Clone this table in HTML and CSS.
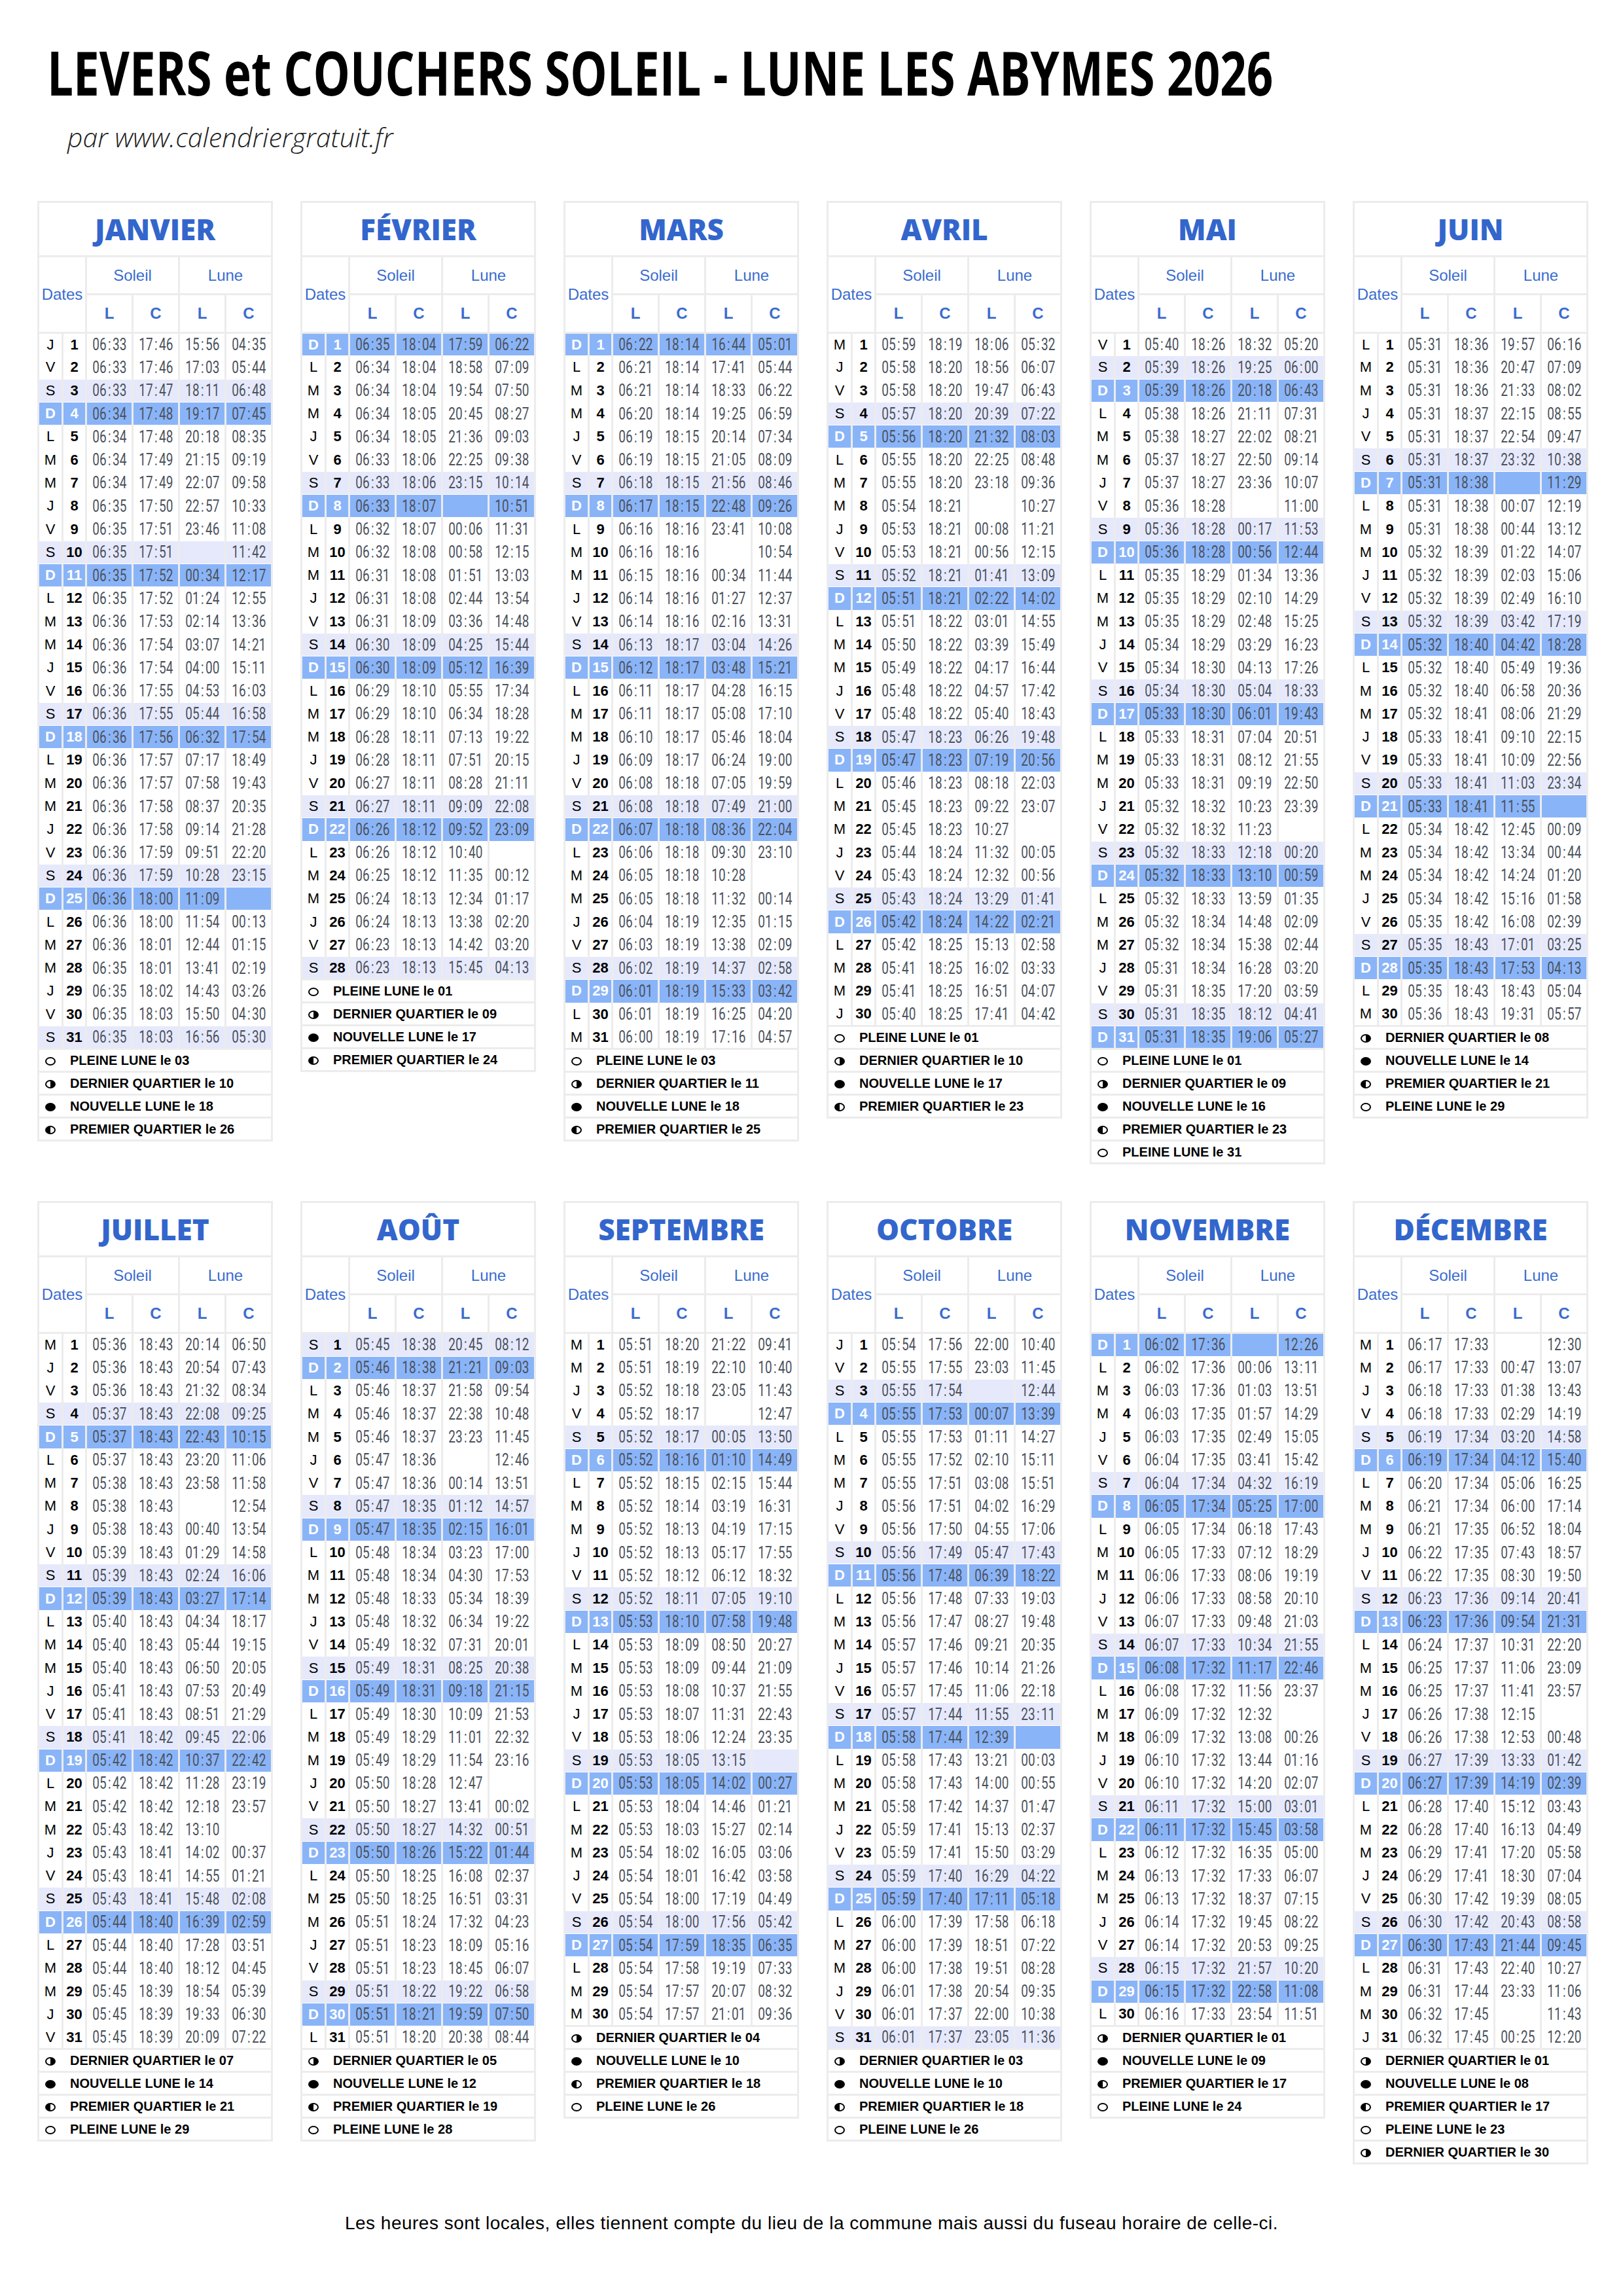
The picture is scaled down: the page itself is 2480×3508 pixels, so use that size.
FILE: index.html
```html
<!DOCTYPE html>
<html lang="fr">
<head>
<meta charset="utf-8">
<title>Levers et couchers soleil - lune Les Abymes 2026</title>
<link rel="stylesheet" href="styles.css">
</head>
<body>
<header class="head">
<h1 class="title"><span>LEVERS et COUCHERS SOLEIL - LUNE LES ABYMES 2026</span></h1>
<p class="sub">par www.calendriergratuit.fr</p>
</header>
<main class="year">

<table class="cal">
<colgroup><col class="c1"><col class="c2"><col class="ct"><col class="ct"><col class="ct"><col class="ct"></colgroup>
<thead>
<tr class="h0"><th colspan="6">JANVIER</th></tr>
<tr class="h1"><th colspan="2" rowspan="2">Dates</th><th colspan="2">Soleil</th><th colspan="2">Lune</th></tr>
<tr class="h2"><th>L</th><th>C</th><th>L</th><th>C</th></tr>
</thead>
<tbody class="days">
<tr><td>J<td>1<td><span>06 : 33</span><td><span>17 : 46</span><td><span>15 : 56</span><td><span>04 : 35</span>
<tr><td>V<td>2<td><span>06 : 33</span><td><span>17 : 46</span><td><span>17 : 03</span><td><span>05 : 44</span>
<tr class="s"><td>S<td>3<td><span>06 : 33</span><td><span>17 : 47</span><td><span>18 : 11</span><td><span>06 : 48</span>
<tr class="d"><td>D<td>4<td><span>06 : 34</span><td><span>17 : 48</span><td><span>19 : 17</span><td><span>07 : 45</span>
<tr><td>L<td>5<td><span>06 : 34</span><td><span>17 : 48</span><td><span>20 : 18</span><td><span>08 : 35</span>
<tr><td>M<td>6<td><span>06 : 34</span><td><span>17 : 49</span><td><span>21 : 15</span><td><span>09 : 19</span>
<tr><td>M<td>7<td><span>06 : 34</span><td><span>17 : 49</span><td><span>22 : 07</span><td><span>09 : 58</span>
<tr><td>J<td>8<td><span>06 : 35</span><td><span>17 : 50</span><td><span>22 : 57</span><td><span>10 : 33</span>
<tr><td>V<td>9<td><span>06 : 35</span><td><span>17 : 51</span><td><span>23 : 46</span><td><span>11 : 08</span>
<tr class="s"><td>S<td>10<td><span>06 : 35</span><td><span>17 : 51</span><td><td><span>11 : 42</span>
<tr class="d"><td>D<td>11<td><span>06 : 35</span><td><span>17 : 52</span><td><span>00 : 34</span><td><span>12 : 17</span>
<tr><td>L<td>12<td><span>06 : 35</span><td><span>17 : 52</span><td><span>01 : 24</span><td><span>12 : 55</span>
<tr><td>M<td>13<td><span>06 : 36</span><td><span>17 : 53</span><td><span>02 : 14</span><td><span>13 : 36</span>
<tr><td>M<td>14<td><span>06 : 36</span><td><span>17 : 54</span><td><span>03 : 07</span><td><span>14 : 21</span>
<tr><td>J<td>15<td><span>06 : 36</span><td><span>17 : 54</span><td><span>04 : 00</span><td><span>15 : 11</span>
<tr><td>V<td>16<td><span>06 : 36</span><td><span>17 : 55</span><td><span>04 : 53</span><td><span>16 : 03</span>
<tr class="s"><td>S<td>17<td><span>06 : 36</span><td><span>17 : 55</span><td><span>05 : 44</span><td><span>16 : 58</span>
<tr class="d"><td>D<td>18<td><span>06 : 36</span><td><span>17 : 56</span><td><span>06 : 32</span><td><span>17 : 54</span>
<tr><td>L<td>19<td><span>06 : 36</span><td><span>17 : 57</span><td><span>07 : 17</span><td><span>18 : 49</span>
<tr><td>M<td>20<td><span>06 : 36</span><td><span>17 : 57</span><td><span>07 : 58</span><td><span>19 : 43</span>
<tr><td>M<td>21<td><span>06 : 36</span><td><span>17 : 58</span><td><span>08 : 37</span><td><span>20 : 35</span>
<tr><td>J<td>22<td><span>06 : 36</span><td><span>17 : 58</span><td><span>09 : 14</span><td><span>21 : 28</span>
<tr><td>V<td>23<td><span>06 : 36</span><td><span>17 : 59</span><td><span>09 : 51</span><td><span>22 : 20</span>
<tr class="s"><td>S<td>24<td><span>06 : 36</span><td><span>17 : 59</span><td><span>10 : 28</span><td><span>23 : 15</span>
<tr class="d"><td>D<td>25<td><span>06 : 36</span><td><span>18 : 00</span><td><span>11 : 09</span><td>
<tr><td>L<td>26<td><span>06 : 36</span><td><span>18 : 00</span><td><span>11 : 54</span><td><span>00 : 13</span>
<tr><td>M<td>27<td><span>06 : 36</span><td><span>18 : 01</span><td><span>12 : 44</span><td><span>01 : 15</span>
<tr><td>M<td>28<td><span>06 : 35</span><td><span>18 : 01</span><td><span>13 : 41</span><td><span>02 : 19</span>
<tr><td>J<td>29<td><span>06 : 35</span><td><span>18 : 02</span><td><span>14 : 43</span><td><span>03 : 26</span>
<tr><td>V<td>30<td><span>06 : 35</span><td><span>18 : 03</span><td><span>15 : 50</span><td><span>04 : 30</span>
<tr class="s"><td>S<td>31<td><span>06 : 35</span><td><span>18 : 03</span><td><span>16 : 56</span><td><span>05 : 30</span>
</tbody>
<tbody class="ph">
<tr><td colspan="6"><i class="pl"></i>PLEINE LUNE le 03
<tr><td colspan="6"><i class="dq"></i>DERNIER QUARTIER le 10
<tr><td colspan="6"><i class="nl"></i>NOUVELLE LUNE le 18
<tr><td colspan="6"><i class="pq"></i>PREMIER QUARTIER le 26
</tbody>
</table>

<table class="cal">
<colgroup><col class="c1"><col class="c2"><col class="ct"><col class="ct"><col class="ct"><col class="ct"></colgroup>
<thead>
<tr class="h0"><th colspan="6">FÉVRIER</th></tr>
<tr class="h1"><th colspan="2" rowspan="2">Dates</th><th colspan="2">Soleil</th><th colspan="2">Lune</th></tr>
<tr class="h2"><th>L</th><th>C</th><th>L</th><th>C</th></tr>
</thead>
<tbody class="days">
<tr class="d"><td>D<td>1<td><span>06 : 35</span><td><span>18 : 04</span><td><span>17 : 59</span><td><span>06 : 22</span>
<tr><td>L<td>2<td><span>06 : 34</span><td><span>18 : 04</span><td><span>18 : 58</span><td><span>07 : 09</span>
<tr><td>M<td>3<td><span>06 : 34</span><td><span>18 : 04</span><td><span>19 : 54</span><td><span>07 : 50</span>
<tr><td>M<td>4<td><span>06 : 34</span><td><span>18 : 05</span><td><span>20 : 45</span><td><span>08 : 27</span>
<tr><td>J<td>5<td><span>06 : 34</span><td><span>18 : 05</span><td><span>21 : 36</span><td><span>09 : 03</span>
<tr><td>V<td>6<td><span>06 : 33</span><td><span>18 : 06</span><td><span>22 : 25</span><td><span>09 : 38</span>
<tr class="s"><td>S<td>7<td><span>06 : 33</span><td><span>18 : 06</span><td><span>23 : 15</span><td><span>10 : 14</span>
<tr class="d"><td>D<td>8<td><span>06 : 33</span><td><span>18 : 07</span><td><td><span>10 : 51</span>
<tr><td>L<td>9<td><span>06 : 32</span><td><span>18 : 07</span><td><span>00 : 06</span><td><span>11 : 31</span>
<tr><td>M<td>10<td><span>06 : 32</span><td><span>18 : 08</span><td><span>00 : 58</span><td><span>12 : 15</span>
<tr><td>M<td>11<td><span>06 : 31</span><td><span>18 : 08</span><td><span>01 : 51</span><td><span>13 : 03</span>
<tr><td>J<td>12<td><span>06 : 31</span><td><span>18 : 08</span><td><span>02 : 44</span><td><span>13 : 54</span>
<tr><td>V<td>13<td><span>06 : 31</span><td><span>18 : 09</span><td><span>03 : 36</span><td><span>14 : 48</span>
<tr class="s"><td>S<td>14<td><span>06 : 30</span><td><span>18 : 09</span><td><span>04 : 25</span><td><span>15 : 44</span>
<tr class="d"><td>D<td>15<td><span>06 : 30</span><td><span>18 : 09</span><td><span>05 : 12</span><td><span>16 : 39</span>
<tr><td>L<td>16<td><span>06 : 29</span><td><span>18 : 10</span><td><span>05 : 55</span><td><span>17 : 34</span>
<tr><td>M<td>17<td><span>06 : 29</span><td><span>18 : 10</span><td><span>06 : 34</span><td><span>18 : 28</span>
<tr><td>M<td>18<td><span>06 : 28</span><td><span>18 : 11</span><td><span>07 : 13</span><td><span>19 : 22</span>
<tr><td>J<td>19<td><span>06 : 28</span><td><span>18 : 11</span><td><span>07 : 51</span><td><span>20 : 15</span>
<tr><td>V<td>20<td><span>06 : 27</span><td><span>18 : 11</span><td><span>08 : 28</span><td><span>21 : 11</span>
<tr class="s"><td>S<td>21<td><span>06 : 27</span><td><span>18 : 11</span><td><span>09 : 09</span><td><span>22 : 08</span>
<tr class="d"><td>D<td>22<td><span>06 : 26</span><td><span>18 : 12</span><td><span>09 : 52</span><td><span>23 : 09</span>
<tr><td>L<td>23<td><span>06 : 26</span><td><span>18 : 12</span><td><span>10 : 40</span><td>
<tr><td>M<td>24<td><span>06 : 25</span><td><span>18 : 12</span><td><span>11 : 35</span><td><span>00 : 12</span>
<tr><td>M<td>25<td><span>06 : 24</span><td><span>18 : 13</span><td><span>12 : 34</span><td><span>01 : 17</span>
<tr><td>J<td>26<td><span>06 : 24</span><td><span>18 : 13</span><td><span>13 : 38</span><td><span>02 : 20</span>
<tr><td>V<td>27<td><span>06 : 23</span><td><span>18 : 13</span><td><span>14 : 42</span><td><span>03 : 20</span>
<tr class="s"><td>S<td>28<td><span>06 : 23</span><td><span>18 : 13</span><td><span>15 : 45</span><td><span>04 : 13</span>
</tbody>
<tbody class="ph">
<tr><td colspan="6"><i class="pl"></i>PLEINE LUNE le 01
<tr><td colspan="6"><i class="dq"></i>DERNIER QUARTIER le 09
<tr><td colspan="6"><i class="nl"></i>NOUVELLE LUNE le 17
<tr><td colspan="6"><i class="pq"></i>PREMIER QUARTIER le 24
</tbody>
</table>

<table class="cal">
<colgroup><col class="c1"><col class="c2"><col class="ct"><col class="ct"><col class="ct"><col class="ct"></colgroup>
<thead>
<tr class="h0"><th colspan="6">MARS</th></tr>
<tr class="h1"><th colspan="2" rowspan="2">Dates</th><th colspan="2">Soleil</th><th colspan="2">Lune</th></tr>
<tr class="h2"><th>L</th><th>C</th><th>L</th><th>C</th></tr>
</thead>
<tbody class="days">
<tr class="d"><td>D<td>1<td><span>06 : 22</span><td><span>18 : 14</span><td><span>16 : 44</span><td><span>05 : 01</span>
<tr><td>L<td>2<td><span>06 : 21</span><td><span>18 : 14</span><td><span>17 : 41</span><td><span>05 : 44</span>
<tr><td>M<td>3<td><span>06 : 21</span><td><span>18 : 14</span><td><span>18 : 33</span><td><span>06 : 22</span>
<tr><td>M<td>4<td><span>06 : 20</span><td><span>18 : 14</span><td><span>19 : 25</span><td><span>06 : 59</span>
<tr><td>J<td>5<td><span>06 : 19</span><td><span>18 : 15</span><td><span>20 : 14</span><td><span>07 : 34</span>
<tr><td>V<td>6<td><span>06 : 19</span><td><span>18 : 15</span><td><span>21 : 05</span><td><span>08 : 09</span>
<tr class="s"><td>S<td>7<td><span>06 : 18</span><td><span>18 : 15</span><td><span>21 : 56</span><td><span>08 : 46</span>
<tr class="d"><td>D<td>8<td><span>06 : 17</span><td><span>18 : 15</span><td><span>22 : 48</span><td><span>09 : 26</span>
<tr><td>L<td>9<td><span>06 : 16</span><td><span>18 : 16</span><td><span>23 : 41</span><td><span>10 : 08</span>
<tr><td>M<td>10<td><span>06 : 16</span><td><span>18 : 16</span><td><td><span>10 : 54</span>
<tr><td>M<td>11<td><span>06 : 15</span><td><span>18 : 16</span><td><span>00 : 34</span><td><span>11 : 44</span>
<tr><td>J<td>12<td><span>06 : 14</span><td><span>18 : 16</span><td><span>01 : 27</span><td><span>12 : 37</span>
<tr><td>V<td>13<td><span>06 : 14</span><td><span>18 : 16</span><td><span>02 : 16</span><td><span>13 : 31</span>
<tr class="s"><td>S<td>14<td><span>06 : 13</span><td><span>18 : 17</span><td><span>03 : 04</span><td><span>14 : 26</span>
<tr class="d"><td>D<td>15<td><span>06 : 12</span><td><span>18 : 17</span><td><span>03 : 48</span><td><span>15 : 21</span>
<tr><td>L<td>16<td><span>06 : 11</span><td><span>18 : 17</span><td><span>04 : 28</span><td><span>16 : 15</span>
<tr><td>M<td>17<td><span>06 : 11</span><td><span>18 : 17</span><td><span>05 : 08</span><td><span>17 : 10</span>
<tr><td>M<td>18<td><span>06 : 10</span><td><span>18 : 17</span><td><span>05 : 46</span><td><span>18 : 04</span>
<tr><td>J<td>19<td><span>06 : 09</span><td><span>18 : 17</span><td><span>06 : 24</span><td><span>19 : 00</span>
<tr><td>V<td>20<td><span>06 : 08</span><td><span>18 : 18</span><td><span>07 : 05</span><td><span>19 : 59</span>
<tr class="s"><td>S<td>21<td><span>06 : 08</span><td><span>18 : 18</span><td><span>07 : 49</span><td><span>21 : 00</span>
<tr class="d"><td>D<td>22<td><span>06 : 07</span><td><span>18 : 18</span><td><span>08 : 36</span><td><span>22 : 04</span>
<tr><td>L<td>23<td><span>06 : 06</span><td><span>18 : 18</span><td><span>09 : 30</span><td><span>23 : 10</span>
<tr><td>M<td>24<td><span>06 : 05</span><td><span>18 : 18</span><td><span>10 : 28</span><td>
<tr><td>M<td>25<td><span>06 : 05</span><td><span>18 : 18</span><td><span>11 : 32</span><td><span>00 : 14</span>
<tr><td>J<td>26<td><span>06 : 04</span><td><span>18 : 19</span><td><span>12 : 35</span><td><span>01 : 15</span>
<tr><td>V<td>27<td><span>06 : 03</span><td><span>18 : 19</span><td><span>13 : 38</span><td><span>02 : 09</span>
<tr class="s"><td>S<td>28<td><span>06 : 02</span><td><span>18 : 19</span><td><span>14 : 37</span><td><span>02 : 58</span>
<tr class="d"><td>D<td>29<td><span>06 : 01</span><td><span>18 : 19</span><td><span>15 : 33</span><td><span>03 : 42</span>
<tr><td>L<td>30<td><span>06 : 01</span><td><span>18 : 19</span><td><span>16 : 25</span><td><span>04 : 20</span>
<tr><td>M<td>31<td><span>06 : 00</span><td><span>18 : 19</span><td><span>17 : 16</span><td><span>04 : 57</span>
</tbody>
<tbody class="ph">
<tr><td colspan="6"><i class="pl"></i>PLEINE LUNE le 03
<tr><td colspan="6"><i class="dq"></i>DERNIER QUARTIER le 11
<tr><td colspan="6"><i class="nl"></i>NOUVELLE LUNE le 18
<tr><td colspan="6"><i class="pq"></i>PREMIER QUARTIER le 25
</tbody>
</table>

<table class="cal">
<colgroup><col class="c1"><col class="c2"><col class="ct"><col class="ct"><col class="ct"><col class="ct"></colgroup>
<thead>
<tr class="h0"><th colspan="6">AVRIL</th></tr>
<tr class="h1"><th colspan="2" rowspan="2">Dates</th><th colspan="2">Soleil</th><th colspan="2">Lune</th></tr>
<tr class="h2"><th>L</th><th>C</th><th>L</th><th>C</th></tr>
</thead>
<tbody class="days">
<tr><td>M<td>1<td><span>05 : 59</span><td><span>18 : 19</span><td><span>18 : 06</span><td><span>05 : 32</span>
<tr><td>J<td>2<td><span>05 : 58</span><td><span>18 : 20</span><td><span>18 : 56</span><td><span>06 : 07</span>
<tr><td>V<td>3<td><span>05 : 58</span><td><span>18 : 20</span><td><span>19 : 47</span><td><span>06 : 43</span>
<tr class="s"><td>S<td>4<td><span>05 : 57</span><td><span>18 : 20</span><td><span>20 : 39</span><td><span>07 : 22</span>
<tr class="d"><td>D<td>5<td><span>05 : 56</span><td><span>18 : 20</span><td><span>21 : 32</span><td><span>08 : 03</span>
<tr><td>L<td>6<td><span>05 : 55</span><td><span>18 : 20</span><td><span>22 : 25</span><td><span>08 : 48</span>
<tr><td>M<td>7<td><span>05 : 55</span><td><span>18 : 20</span><td><span>23 : 18</span><td><span>09 : 36</span>
<tr><td>M<td>8<td><span>05 : 54</span><td><span>18 : 21</span><td><td><span>10 : 27</span>
<tr><td>J<td>9<td><span>05 : 53</span><td><span>18 : 21</span><td><span>00 : 08</span><td><span>11 : 21</span>
<tr><td>V<td>10<td><span>05 : 53</span><td><span>18 : 21</span><td><span>00 : 56</span><td><span>12 : 15</span>
<tr class="s"><td>S<td>11<td><span>05 : 52</span><td><span>18 : 21</span><td><span>01 : 41</span><td><span>13 : 09</span>
<tr class="d"><td>D<td>12<td><span>05 : 51</span><td><span>18 : 21</span><td><span>02 : 22</span><td><span>14 : 02</span>
<tr><td>L<td>13<td><span>05 : 51</span><td><span>18 : 22</span><td><span>03 : 01</span><td><span>14 : 55</span>
<tr><td>M<td>14<td><span>05 : 50</span><td><span>18 : 22</span><td><span>03 : 39</span><td><span>15 : 49</span>
<tr><td>M<td>15<td><span>05 : 49</span><td><span>18 : 22</span><td><span>04 : 17</span><td><span>16 : 44</span>
<tr><td>J<td>16<td><span>05 : 48</span><td><span>18 : 22</span><td><span>04 : 57</span><td><span>17 : 42</span>
<tr><td>V<td>17<td><span>05 : 48</span><td><span>18 : 22</span><td><span>05 : 40</span><td><span>18 : 43</span>
<tr class="s"><td>S<td>18<td><span>05 : 47</span><td><span>18 : 23</span><td><span>06 : 26</span><td><span>19 : 48</span>
<tr class="d"><td>D<td>19<td><span>05 : 47</span><td><span>18 : 23</span><td><span>07 : 19</span><td><span>20 : 56</span>
<tr><td>L<td>20<td><span>05 : 46</span><td><span>18 : 23</span><td><span>08 : 18</span><td><span>22 : 03</span>
<tr><td>M<td>21<td><span>05 : 45</span><td><span>18 : 23</span><td><span>09 : 22</span><td><span>23 : 07</span>
<tr><td>M<td>22<td><span>05 : 45</span><td><span>18 : 23</span><td><span>10 : 27</span><td>
<tr><td>J<td>23<td><span>05 : 44</span><td><span>18 : 24</span><td><span>11 : 32</span><td><span>00 : 05</span>
<tr><td>V<td>24<td><span>05 : 43</span><td><span>18 : 24</span><td><span>12 : 32</span><td><span>00 : 56</span>
<tr class="s"><td>S<td>25<td><span>05 : 43</span><td><span>18 : 24</span><td><span>13 : 29</span><td><span>01 : 41</span>
<tr class="d"><td>D<td>26<td><span>05 : 42</span><td><span>18 : 24</span><td><span>14 : 22</span><td><span>02 : 21</span>
<tr><td>L<td>27<td><span>05 : 42</span><td><span>18 : 25</span><td><span>15 : 13</span><td><span>02 : 58</span>
<tr><td>M<td>28<td><span>05 : 41</span><td><span>18 : 25</span><td><span>16 : 02</span><td><span>03 : 33</span>
<tr><td>M<td>29<td><span>05 : 41</span><td><span>18 : 25</span><td><span>16 : 51</span><td><span>04 : 07</span>
<tr><td>J<td>30<td><span>05 : 40</span><td><span>18 : 25</span><td><span>17 : 41</span><td><span>04 : 42</span>
</tbody>
<tbody class="ph">
<tr><td colspan="6"><i class="pl"></i>PLEINE LUNE le 01
<tr><td colspan="6"><i class="dq"></i>DERNIER QUARTIER le 10
<tr><td colspan="6"><i class="nl"></i>NOUVELLE LUNE le 17
<tr><td colspan="6"><i class="pq"></i>PREMIER QUARTIER le 23
</tbody>
</table>

<table class="cal">
<colgroup><col class="c1"><col class="c2"><col class="ct"><col class="ct"><col class="ct"><col class="ct"></colgroup>
<thead>
<tr class="h0"><th colspan="6">MAI</th></tr>
<tr class="h1"><th colspan="2" rowspan="2">Dates</th><th colspan="2">Soleil</th><th colspan="2">Lune</th></tr>
<tr class="h2"><th>L</th><th>C</th><th>L</th><th>C</th></tr>
</thead>
<tbody class="days">
<tr><td>V<td>1<td><span>05 : 40</span><td><span>18 : 26</span><td><span>18 : 32</span><td><span>05 : 20</span>
<tr class="s"><td>S<td>2<td><span>05 : 39</span><td><span>18 : 26</span><td><span>19 : 25</span><td><span>06 : 00</span>
<tr class="d"><td>D<td>3<td><span>05 : 39</span><td><span>18 : 26</span><td><span>20 : 18</span><td><span>06 : 43</span>
<tr><td>L<td>4<td><span>05 : 38</span><td><span>18 : 26</span><td><span>21 : 11</span><td><span>07 : 31</span>
<tr><td>M<td>5<td><span>05 : 38</span><td><span>18 : 27</span><td><span>22 : 02</span><td><span>08 : 21</span>
<tr><td>M<td>6<td><span>05 : 37</span><td><span>18 : 27</span><td><span>22 : 50</span><td><span>09 : 14</span>
<tr><td>J<td>7<td><span>05 : 37</span><td><span>18 : 27</span><td><span>23 : 36</span><td><span>10 : 07</span>
<tr><td>V<td>8<td><span>05 : 36</span><td><span>18 : 28</span><td><td><span>11 : 00</span>
<tr class="s"><td>S<td>9<td><span>05 : 36</span><td><span>18 : 28</span><td><span>00 : 17</span><td><span>11 : 53</span>
<tr class="d"><td>D<td>10<td><span>05 : 36</span><td><span>18 : 28</span><td><span>00 : 56</span><td><span>12 : 44</span>
<tr><td>L<td>11<td><span>05 : 35</span><td><span>18 : 29</span><td><span>01 : 34</span><td><span>13 : 36</span>
<tr><td>M<td>12<td><span>05 : 35</span><td><span>18 : 29</span><td><span>02 : 10</span><td><span>14 : 29</span>
<tr><td>M<td>13<td><span>05 : 35</span><td><span>18 : 29</span><td><span>02 : 48</span><td><span>15 : 25</span>
<tr><td>J<td>14<td><span>05 : 34</span><td><span>18 : 29</span><td><span>03 : 29</span><td><span>16 : 23</span>
<tr><td>V<td>15<td><span>05 : 34</span><td><span>18 : 30</span><td><span>04 : 13</span><td><span>17 : 26</span>
<tr class="s"><td>S<td>16<td><span>05 : 34</span><td><span>18 : 30</span><td><span>05 : 04</span><td><span>18 : 33</span>
<tr class="d"><td>D<td>17<td><span>05 : 33</span><td><span>18 : 30</span><td><span>06 : 01</span><td><span>19 : 43</span>
<tr><td>L<td>18<td><span>05 : 33</span><td><span>18 : 31</span><td><span>07 : 04</span><td><span>20 : 51</span>
<tr><td>M<td>19<td><span>05 : 33</span><td><span>18 : 31</span><td><span>08 : 12</span><td><span>21 : 55</span>
<tr><td>M<td>20<td><span>05 : 33</span><td><span>18 : 31</span><td><span>09 : 19</span><td><span>22 : 50</span>
<tr><td>J<td>21<td><span>05 : 32</span><td><span>18 : 32</span><td><span>10 : 23</span><td><span>23 : 39</span>
<tr><td>V<td>22<td><span>05 : 32</span><td><span>18 : 32</span><td><span>11 : 23</span><td>
<tr class="s"><td>S<td>23<td><span>05 : 32</span><td><span>18 : 33</span><td><span>12 : 18</span><td><span>00 : 20</span>
<tr class="d"><td>D<td>24<td><span>05 : 32</span><td><span>18 : 33</span><td><span>13 : 10</span><td><span>00 : 59</span>
<tr><td>L<td>25<td><span>05 : 32</span><td><span>18 : 33</span><td><span>13 : 59</span><td><span>01 : 35</span>
<tr><td>M<td>26<td><span>05 : 32</span><td><span>18 : 34</span><td><span>14 : 48</span><td><span>02 : 09</span>
<tr><td>M<td>27<td><span>05 : 32</span><td><span>18 : 34</span><td><span>15 : 38</span><td><span>02 : 44</span>
<tr><td>J<td>28<td><span>05 : 31</span><td><span>18 : 34</span><td><span>16 : 28</span><td><span>03 : 20</span>
<tr><td>V<td>29<td><span>05 : 31</span><td><span>18 : 35</span><td><span>17 : 20</span><td><span>03 : 59</span>
<tr class="s"><td>S<td>30<td><span>05 : 31</span><td><span>18 : 35</span><td><span>18 : 12</span><td><span>04 : 41</span>
<tr class="d"><td>D<td>31<td><span>05 : 31</span><td><span>18 : 35</span><td><span>19 : 06</span><td><span>05 : 27</span>
</tbody>
<tbody class="ph">
<tr><td colspan="6"><i class="pl"></i>PLEINE LUNE le 01
<tr><td colspan="6"><i class="dq"></i>DERNIER QUARTIER le 09
<tr><td colspan="6"><i class="nl"></i>NOUVELLE LUNE le 16
<tr><td colspan="6"><i class="pq"></i>PREMIER QUARTIER le 23
<tr><td colspan="6"><i class="pl"></i>PLEINE LUNE le 31
</tbody>
</table>

<table class="cal">
<colgroup><col class="c1"><col class="c2"><col class="ct"><col class="ct"><col class="ct"><col class="ct"></colgroup>
<thead>
<tr class="h0"><th colspan="6">JUIN</th></tr>
<tr class="h1"><th colspan="2" rowspan="2">Dates</th><th colspan="2">Soleil</th><th colspan="2">Lune</th></tr>
<tr class="h2"><th>L</th><th>C</th><th>L</th><th>C</th></tr>
</thead>
<tbody class="days">
<tr><td>L<td>1<td><span>05 : 31</span><td><span>18 : 36</span><td><span>19 : 57</span><td><span>06 : 16</span>
<tr><td>M<td>2<td><span>05 : 31</span><td><span>18 : 36</span><td><span>20 : 47</span><td><span>07 : 09</span>
<tr><td>M<td>3<td><span>05 : 31</span><td><span>18 : 36</span><td><span>21 : 33</span><td><span>08 : 02</span>
<tr><td>J<td>4<td><span>05 : 31</span><td><span>18 : 37</span><td><span>22 : 15</span><td><span>08 : 55</span>
<tr><td>V<td>5<td><span>05 : 31</span><td><span>18 : 37</span><td><span>22 : 54</span><td><span>09 : 47</span>
<tr class="s"><td>S<td>6<td><span>05 : 31</span><td><span>18 : 37</span><td><span>23 : 32</span><td><span>10 : 38</span>
<tr class="d"><td>D<td>7<td><span>05 : 31</span><td><span>18 : 38</span><td><td><span>11 : 29</span>
<tr><td>L<td>8<td><span>05 : 31</span><td><span>18 : 38</span><td><span>00 : 07</span><td><span>12 : 19</span>
<tr><td>M<td>9<td><span>05 : 31</span><td><span>18 : 38</span><td><span>00 : 44</span><td><span>13 : 12</span>
<tr><td>M<td>10<td><span>05 : 32</span><td><span>18 : 39</span><td><span>01 : 22</span><td><span>14 : 07</span>
<tr><td>J<td>11<td><span>05 : 32</span><td><span>18 : 39</span><td><span>02 : 03</span><td><span>15 : 06</span>
<tr><td>V<td>12<td><span>05 : 32</span><td><span>18 : 39</span><td><span>02 : 49</span><td><span>16 : 10</span>
<tr class="s"><td>S<td>13<td><span>05 : 32</span><td><span>18 : 39</span><td><span>03 : 42</span><td><span>17 : 19</span>
<tr class="d"><td>D<td>14<td><span>05 : 32</span><td><span>18 : 40</span><td><span>04 : 42</span><td><span>18 : 28</span>
<tr><td>L<td>15<td><span>05 : 32</span><td><span>18 : 40</span><td><span>05 : 49</span><td><span>19 : 36</span>
<tr><td>M<td>16<td><span>05 : 32</span><td><span>18 : 40</span><td><span>06 : 58</span><td><span>20 : 36</span>
<tr><td>M<td>17<td><span>05 : 32</span><td><span>18 : 41</span><td><span>08 : 06</span><td><span>21 : 29</span>
<tr><td>J<td>18<td><span>05 : 33</span><td><span>18 : 41</span><td><span>09 : 10</span><td><span>22 : 15</span>
<tr><td>V<td>19<td><span>05 : 33</span><td><span>18 : 41</span><td><span>10 : 09</span><td><span>22 : 56</span>
<tr class="s"><td>S<td>20<td><span>05 : 33</span><td><span>18 : 41</span><td><span>11 : 03</span><td><span>23 : 34</span>
<tr class="d"><td>D<td>21<td><span>05 : 33</span><td><span>18 : 41</span><td><span>11 : 55</span><td>
<tr><td>L<td>22<td><span>05 : 34</span><td><span>18 : 42</span><td><span>12 : 45</span><td><span>00 : 09</span>
<tr><td>M<td>23<td><span>05 : 34</span><td><span>18 : 42</span><td><span>13 : 34</span><td><span>00 : 44</span>
<tr><td>M<td>24<td><span>05 : 34</span><td><span>18 : 42</span><td><span>14 : 24</span><td><span>01 : 20</span>
<tr><td>J<td>25<td><span>05 : 34</span><td><span>18 : 42</span><td><span>15 : 16</span><td><span>01 : 58</span>
<tr><td>V<td>26<td><span>05 : 35</span><td><span>18 : 42</span><td><span>16 : 08</span><td><span>02 : 39</span>
<tr class="s"><td>S<td>27<td><span>05 : 35</span><td><span>18 : 43</span><td><span>17 : 01</span><td><span>03 : 25</span>
<tr class="d"><td>D<td>28<td><span>05 : 35</span><td><span>18 : 43</span><td><span>17 : 53</span><td><span>04 : 13</span>
<tr><td>L<td>29<td><span>05 : 35</span><td><span>18 : 43</span><td><span>18 : 43</span><td><span>05 : 04</span>
<tr><td>M<td>30<td><span>05 : 36</span><td><span>18 : 43</span><td><span>19 : 31</span><td><span>05 : 57</span>
</tbody>
<tbody class="ph">
<tr><td colspan="6"><i class="dq"></i>DERNIER QUARTIER le 08
<tr><td colspan="6"><i class="nl"></i>NOUVELLE LUNE le 14
<tr><td colspan="6"><i class="pq"></i>PREMIER QUARTIER le 21
<tr><td colspan="6"><i class="pl"></i>PLEINE LUNE le 29
</tbody>
</table>

<table class="cal">
<colgroup><col class="c1"><col class="c2"><col class="ct"><col class="ct"><col class="ct"><col class="ct"></colgroup>
<thead>
<tr class="h0"><th colspan="6">JUILLET</th></tr>
<tr class="h1"><th colspan="2" rowspan="2">Dates</th><th colspan="2">Soleil</th><th colspan="2">Lune</th></tr>
<tr class="h2"><th>L</th><th>C</th><th>L</th><th>C</th></tr>
</thead>
<tbody class="days">
<tr><td>M<td>1<td><span>05 : 36</span><td><span>18 : 43</span><td><span>20 : 14</span><td><span>06 : 50</span>
<tr><td>J<td>2<td><span>05 : 36</span><td><span>18 : 43</span><td><span>20 : 54</span><td><span>07 : 43</span>
<tr><td>V<td>3<td><span>05 : 36</span><td><span>18 : 43</span><td><span>21 : 32</span><td><span>08 : 34</span>
<tr class="s"><td>S<td>4<td><span>05 : 37</span><td><span>18 : 43</span><td><span>22 : 08</span><td><span>09 : 25</span>
<tr class="d"><td>D<td>5<td><span>05 : 37</span><td><span>18 : 43</span><td><span>22 : 43</span><td><span>10 : 15</span>
<tr><td>L<td>6<td><span>05 : 37</span><td><span>18 : 43</span><td><span>23 : 20</span><td><span>11 : 06</span>
<tr><td>M<td>7<td><span>05 : 38</span><td><span>18 : 43</span><td><span>23 : 58</span><td><span>11 : 58</span>
<tr><td>M<td>8<td><span>05 : 38</span><td><span>18 : 43</span><td><td><span>12 : 54</span>
<tr><td>J<td>9<td><span>05 : 38</span><td><span>18 : 43</span><td><span>00 : 40</span><td><span>13 : 54</span>
<tr><td>V<td>10<td><span>05 : 39</span><td><span>18 : 43</span><td><span>01 : 29</span><td><span>14 : 58</span>
<tr class="s"><td>S<td>11<td><span>05 : 39</span><td><span>18 : 43</span><td><span>02 : 24</span><td><span>16 : 06</span>
<tr class="d"><td>D<td>12<td><span>05 : 39</span><td><span>18 : 43</span><td><span>03 : 27</span><td><span>17 : 14</span>
<tr><td>L<td>13<td><span>05 : 40</span><td><span>18 : 43</span><td><span>04 : 34</span><td><span>18 : 17</span>
<tr><td>M<td>14<td><span>05 : 40</span><td><span>18 : 43</span><td><span>05 : 44</span><td><span>19 : 15</span>
<tr><td>M<td>15<td><span>05 : 40</span><td><span>18 : 43</span><td><span>06 : 50</span><td><span>20 : 05</span>
<tr><td>J<td>16<td><span>05 : 41</span><td><span>18 : 43</span><td><span>07 : 53</span><td><span>20 : 49</span>
<tr><td>V<td>17<td><span>05 : 41</span><td><span>18 : 43</span><td><span>08 : 51</span><td><span>21 : 29</span>
<tr class="s"><td>S<td>18<td><span>05 : 41</span><td><span>18 : 42</span><td><span>09 : 45</span><td><span>22 : 06</span>
<tr class="d"><td>D<td>19<td><span>05 : 42</span><td><span>18 : 42</span><td><span>10 : 37</span><td><span>22 : 42</span>
<tr><td>L<td>20<td><span>05 : 42</span><td><span>18 : 42</span><td><span>11 : 28</span><td><span>23 : 19</span>
<tr><td>M<td>21<td><span>05 : 42</span><td><span>18 : 42</span><td><span>12 : 18</span><td><span>23 : 57</span>
<tr><td>M<td>22<td><span>05 : 43</span><td><span>18 : 42</span><td><span>13 : 10</span><td>
<tr><td>J<td>23<td><span>05 : 43</span><td><span>18 : 41</span><td><span>14 : 02</span><td><span>00 : 37</span>
<tr><td>V<td>24<td><span>05 : 43</span><td><span>18 : 41</span><td><span>14 : 55</span><td><span>01 : 21</span>
<tr class="s"><td>S<td>25<td><span>05 : 43</span><td><span>18 : 41</span><td><span>15 : 48</span><td><span>02 : 08</span>
<tr class="d"><td>D<td>26<td><span>05 : 44</span><td><span>18 : 40</span><td><span>16 : 39</span><td><span>02 : 59</span>
<tr><td>L<td>27<td><span>05 : 44</span><td><span>18 : 40</span><td><span>17 : 28</span><td><span>03 : 51</span>
<tr><td>M<td>28<td><span>05 : 44</span><td><span>18 : 40</span><td><span>18 : 12</span><td><span>04 : 45</span>
<tr><td>M<td>29<td><span>05 : 45</span><td><span>18 : 39</span><td><span>18 : 54</span><td><span>05 : 39</span>
<tr><td>J<td>30<td><span>05 : 45</span><td><span>18 : 39</span><td><span>19 : 33</span><td><span>06 : 30</span>
<tr><td>V<td>31<td><span>05 : 45</span><td><span>18 : 39</span><td><span>20 : 09</span><td><span>07 : 22</span>
</tbody>
<tbody class="ph">
<tr><td colspan="6"><i class="dq"></i>DERNIER QUARTIER le 07
<tr><td colspan="6"><i class="nl"></i>NOUVELLE LUNE le 14
<tr><td colspan="6"><i class="pq"></i>PREMIER QUARTIER le 21
<tr><td colspan="6"><i class="pl"></i>PLEINE LUNE le 29
</tbody>
</table>

<table class="cal">
<colgroup><col class="c1"><col class="c2"><col class="ct"><col class="ct"><col class="ct"><col class="ct"></colgroup>
<thead>
<tr class="h0"><th colspan="6">AOÛT</th></tr>
<tr class="h1"><th colspan="2" rowspan="2">Dates</th><th colspan="2">Soleil</th><th colspan="2">Lune</th></tr>
<tr class="h2"><th>L</th><th>C</th><th>L</th><th>C</th></tr>
</thead>
<tbody class="days">
<tr class="s"><td>S<td>1<td><span>05 : 45</span><td><span>18 : 38</span><td><span>20 : 45</span><td><span>08 : 12</span>
<tr class="d"><td>D<td>2<td><span>05 : 46</span><td><span>18 : 38</span><td><span>21 : 21</span><td><span>09 : 03</span>
<tr><td>L<td>3<td><span>05 : 46</span><td><span>18 : 37</span><td><span>21 : 58</span><td><span>09 : 54</span>
<tr><td>M<td>4<td><span>05 : 46</span><td><span>18 : 37</span><td><span>22 : 38</span><td><span>10 : 48</span>
<tr><td>M<td>5<td><span>05 : 46</span><td><span>18 : 37</span><td><span>23 : 23</span><td><span>11 : 45</span>
<tr><td>J<td>6<td><span>05 : 47</span><td><span>18 : 36</span><td><td><span>12 : 46</span>
<tr><td>V<td>7<td><span>05 : 47</span><td><span>18 : 36</span><td><span>00 : 14</span><td><span>13 : 51</span>
<tr class="s"><td>S<td>8<td><span>05 : 47</span><td><span>18 : 35</span><td><span>01 : 12</span><td><span>14 : 57</span>
<tr class="d"><td>D<td>9<td><span>05 : 47</span><td><span>18 : 35</span><td><span>02 : 15</span><td><span>16 : 01</span>
<tr><td>L<td>10<td><span>05 : 48</span><td><span>18 : 34</span><td><span>03 : 23</span><td><span>17 : 00</span>
<tr><td>M<td>11<td><span>05 : 48</span><td><span>18 : 34</span><td><span>04 : 30</span><td><span>17 : 53</span>
<tr><td>M<td>12<td><span>05 : 48</span><td><span>18 : 33</span><td><span>05 : 34</span><td><span>18 : 39</span>
<tr><td>J<td>13<td><span>05 : 48</span><td><span>18 : 32</span><td><span>06 : 34</span><td><span>19 : 22</span>
<tr><td>V<td>14<td><span>05 : 49</span><td><span>18 : 32</span><td><span>07 : 31</span><td><span>20 : 01</span>
<tr class="s"><td>S<td>15<td><span>05 : 49</span><td><span>18 : 31</span><td><span>08 : 25</span><td><span>20 : 38</span>
<tr class="d"><td>D<td>16<td><span>05 : 49</span><td><span>18 : 31</span><td><span>09 : 18</span><td><span>21 : 15</span>
<tr><td>L<td>17<td><span>05 : 49</span><td><span>18 : 30</span><td><span>10 : 09</span><td><span>21 : 53</span>
<tr><td>M<td>18<td><span>05 : 49</span><td><span>18 : 29</span><td><span>11 : 01</span><td><span>22 : 32</span>
<tr><td>M<td>19<td><span>05 : 49</span><td><span>18 : 29</span><td><span>11 : 54</span><td><span>23 : 16</span>
<tr><td>J<td>20<td><span>05 : 50</span><td><span>18 : 28</span><td><span>12 : 47</span><td>
<tr><td>V<td>21<td><span>05 : 50</span><td><span>18 : 27</span><td><span>13 : 41</span><td><span>00 : 02</span>
<tr class="s"><td>S<td>22<td><span>05 : 50</span><td><span>18 : 27</span><td><span>14 : 32</span><td><span>00 : 51</span>
<tr class="d"><td>D<td>23<td><span>05 : 50</span><td><span>18 : 26</span><td><span>15 : 22</span><td><span>01 : 44</span>
<tr><td>L<td>24<td><span>05 : 50</span><td><span>18 : 25</span><td><span>16 : 08</span><td><span>02 : 37</span>
<tr><td>M<td>25<td><span>05 : 50</span><td><span>18 : 25</span><td><span>16 : 51</span><td><span>03 : 31</span>
<tr><td>M<td>26<td><span>05 : 51</span><td><span>18 : 24</span><td><span>17 : 32</span><td><span>04 : 23</span>
<tr><td>J<td>27<td><span>05 : 51</span><td><span>18 : 23</span><td><span>18 : 09</span><td><span>05 : 16</span>
<tr><td>V<td>28<td><span>05 : 51</span><td><span>18 : 23</span><td><span>18 : 45</span><td><span>06 : 07</span>
<tr class="s"><td>S<td>29<td><span>05 : 51</span><td><span>18 : 22</span><td><span>19 : 22</span><td><span>06 : 58</span>
<tr class="d"><td>D<td>30<td><span>05 : 51</span><td><span>18 : 21</span><td><span>19 : 59</span><td><span>07 : 50</span>
<tr><td>L<td>31<td><span>05 : 51</span><td><span>18 : 20</span><td><span>20 : 38</span><td><span>08 : 44</span>
</tbody>
<tbody class="ph">
<tr><td colspan="6"><i class="dq"></i>DERNIER QUARTIER le 05
<tr><td colspan="6"><i class="nl"></i>NOUVELLE LUNE le 12
<tr><td colspan="6"><i class="pq"></i>PREMIER QUARTIER le 19
<tr><td colspan="6"><i class="pl"></i>PLEINE LUNE le 28
</tbody>
</table>

<table class="cal">
<colgroup><col class="c1"><col class="c2"><col class="ct"><col class="ct"><col class="ct"><col class="ct"></colgroup>
<thead>
<tr class="h0"><th colspan="6">SEPTEMBRE</th></tr>
<tr class="h1"><th colspan="2" rowspan="2">Dates</th><th colspan="2">Soleil</th><th colspan="2">Lune</th></tr>
<tr class="h2"><th>L</th><th>C</th><th>L</th><th>C</th></tr>
</thead>
<tbody class="days">
<tr><td>M<td>1<td><span>05 : 51</span><td><span>18 : 20</span><td><span>21 : 22</span><td><span>09 : 41</span>
<tr><td>M<td>2<td><span>05 : 51</span><td><span>18 : 19</span><td><span>22 : 10</span><td><span>10 : 40</span>
<tr><td>J<td>3<td><span>05 : 52</span><td><span>18 : 18</span><td><span>23 : 05</span><td><span>11 : 43</span>
<tr><td>V<td>4<td><span>05 : 52</span><td><span>18 : 17</span><td><td><span>12 : 47</span>
<tr class="s"><td>S<td>5<td><span>05 : 52</span><td><span>18 : 17</span><td><span>00 : 05</span><td><span>13 : 50</span>
<tr class="d"><td>D<td>6<td><span>05 : 52</span><td><span>18 : 16</span><td><span>01 : 10</span><td><span>14 : 49</span>
<tr><td>L<td>7<td><span>05 : 52</span><td><span>18 : 15</span><td><span>02 : 15</span><td><span>15 : 44</span>
<tr><td>M<td>8<td><span>05 : 52</span><td><span>18 : 14</span><td><span>03 : 19</span><td><span>16 : 31</span>
<tr><td>M<td>9<td><span>05 : 52</span><td><span>18 : 13</span><td><span>04 : 19</span><td><span>17 : 15</span>
<tr><td>J<td>10<td><span>05 : 52</span><td><span>18 : 13</span><td><span>05 : 17</span><td><span>17 : 55</span>
<tr><td>V<td>11<td><span>05 : 52</span><td><span>18 : 12</span><td><span>06 : 12</span><td><span>18 : 32</span>
<tr class="s"><td>S<td>12<td><span>05 : 52</span><td><span>18 : 11</span><td><span>07 : 05</span><td><span>19 : 10</span>
<tr class="d"><td>D<td>13<td><span>05 : 53</span><td><span>18 : 10</span><td><span>07 : 58</span><td><span>19 : 48</span>
<tr><td>L<td>14<td><span>05 : 53</span><td><span>18 : 09</span><td><span>08 : 50</span><td><span>20 : 27</span>
<tr><td>M<td>15<td><span>05 : 53</span><td><span>18 : 09</span><td><span>09 : 44</span><td><span>21 : 09</span>
<tr><td>M<td>16<td><span>05 : 53</span><td><span>18 : 08</span><td><span>10 : 37</span><td><span>21 : 55</span>
<tr><td>J<td>17<td><span>05 : 53</span><td><span>18 : 07</span><td><span>11 : 31</span><td><span>22 : 43</span>
<tr><td>V<td>18<td><span>05 : 53</span><td><span>18 : 06</span><td><span>12 : 24</span><td><span>23 : 35</span>
<tr class="s"><td>S<td>19<td><span>05 : 53</span><td><span>18 : 05</span><td><span>13 : 15</span><td>
<tr class="d"><td>D<td>20<td><span>05 : 53</span><td><span>18 : 05</span><td><span>14 : 02</span><td><span>00 : 27</span>
<tr><td>L<td>21<td><span>05 : 53</span><td><span>18 : 04</span><td><span>14 : 46</span><td><span>01 : 21</span>
<tr><td>M<td>22<td><span>05 : 53</span><td><span>18 : 03</span><td><span>15 : 27</span><td><span>02 : 14</span>
<tr><td>M<td>23<td><span>05 : 54</span><td><span>18 : 02</span><td><span>16 : 05</span><td><span>03 : 06</span>
<tr><td>J<td>24<td><span>05 : 54</span><td><span>18 : 01</span><td><span>16 : 42</span><td><span>03 : 58</span>
<tr><td>V<td>25<td><span>05 : 54</span><td><span>18 : 00</span><td><span>17 : 19</span><td><span>04 : 49</span>
<tr class="s"><td>S<td>26<td><span>05 : 54</span><td><span>18 : 00</span><td><span>17 : 56</span><td><span>05 : 42</span>
<tr class="d"><td>D<td>27<td><span>05 : 54</span><td><span>17 : 59</span><td><span>18 : 35</span><td><span>06 : 35</span>
<tr><td>L<td>28<td><span>05 : 54</span><td><span>17 : 58</span><td><span>19 : 19</span><td><span>07 : 33</span>
<tr><td>M<td>29<td><span>05 : 54</span><td><span>17 : 57</span><td><span>20 : 07</span><td><span>08 : 32</span>
<tr><td>M<td>30<td><span>05 : 54</span><td><span>17 : 57</span><td><span>21 : 01</span><td><span>09 : 36</span>
</tbody>
<tbody class="ph">
<tr><td colspan="6"><i class="dq"></i>DERNIER QUARTIER le 04
<tr><td colspan="6"><i class="nl"></i>NOUVELLE LUNE le 10
<tr><td colspan="6"><i class="pq"></i>PREMIER QUARTIER le 18
<tr><td colspan="6"><i class="pl"></i>PLEINE LUNE le 26
</tbody>
</table>

<table class="cal">
<colgroup><col class="c1"><col class="c2"><col class="ct"><col class="ct"><col class="ct"><col class="ct"></colgroup>
<thead>
<tr class="h0"><th colspan="6">OCTOBRE</th></tr>
<tr class="h1"><th colspan="2" rowspan="2">Dates</th><th colspan="2">Soleil</th><th colspan="2">Lune</th></tr>
<tr class="h2"><th>L</th><th>C</th><th>L</th><th>C</th></tr>
</thead>
<tbody class="days">
<tr><td>J<td>1<td><span>05 : 54</span><td><span>17 : 56</span><td><span>22 : 00</span><td><span>10 : 40</span>
<tr><td>V<td>2<td><span>05 : 55</span><td><span>17 : 55</span><td><span>23 : 03</span><td><span>11 : 45</span>
<tr class="s"><td>S<td>3<td><span>05 : 55</span><td><span>17 : 54</span><td><td><span>12 : 44</span>
<tr class="d"><td>D<td>4<td><span>05 : 55</span><td><span>17 : 53</span><td><span>00 : 07</span><td><span>13 : 39</span>
<tr><td>L<td>5<td><span>05 : 55</span><td><span>17 : 53</span><td><span>01 : 11</span><td><span>14 : 27</span>
<tr><td>M<td>6<td><span>05 : 55</span><td><span>17 : 52</span><td><span>02 : 10</span><td><span>15 : 11</span>
<tr><td>M<td>7<td><span>05 : 55</span><td><span>17 : 51</span><td><span>03 : 08</span><td><span>15 : 51</span>
<tr><td>J<td>8<td><span>05 : 56</span><td><span>17 : 51</span><td><span>04 : 02</span><td><span>16 : 29</span>
<tr><td>V<td>9<td><span>05 : 56</span><td><span>17 : 50</span><td><span>04 : 55</span><td><span>17 : 06</span>
<tr class="s"><td>S<td>10<td><span>05 : 56</span><td><span>17 : 49</span><td><span>05 : 47</span><td><span>17 : 43</span>
<tr class="d"><td>D<td>11<td><span>05 : 56</span><td><span>17 : 48</span><td><span>06 : 39</span><td><span>18 : 22</span>
<tr><td>L<td>12<td><span>05 : 56</span><td><span>17 : 48</span><td><span>07 : 33</span><td><span>19 : 03</span>
<tr><td>M<td>13<td><span>05 : 56</span><td><span>17 : 47</span><td><span>08 : 27</span><td><span>19 : 48</span>
<tr><td>M<td>14<td><span>05 : 57</span><td><span>17 : 46</span><td><span>09 : 21</span><td><span>20 : 35</span>
<tr><td>J<td>15<td><span>05 : 57</span><td><span>17 : 46</span><td><span>10 : 14</span><td><span>21 : 26</span>
<tr><td>V<td>16<td><span>05 : 57</span><td><span>17 : 45</span><td><span>11 : 06</span><td><span>22 : 18</span>
<tr class="s"><td>S<td>17<td><span>05 : 57</span><td><span>17 : 44</span><td><span>11 : 55</span><td><span>23 : 11</span>
<tr class="d"><td>D<td>18<td><span>05 : 58</span><td><span>17 : 44</span><td><span>12 : 39</span><td>
<tr><td>L<td>19<td><span>05 : 58</span><td><span>17 : 43</span><td><span>13 : 21</span><td><span>00 : 03</span>
<tr><td>M<td>20<td><span>05 : 58</span><td><span>17 : 43</span><td><span>14 : 00</span><td><span>00 : 55</span>
<tr><td>M<td>21<td><span>05 : 58</span><td><span>17 : 42</span><td><span>14 : 37</span><td><span>01 : 47</span>
<tr><td>J<td>22<td><span>05 : 59</span><td><span>17 : 41</span><td><span>15 : 13</span><td><span>02 : 37</span>
<tr><td>V<td>23<td><span>05 : 59</span><td><span>17 : 41</span><td><span>15 : 50</span><td><span>03 : 29</span>
<tr class="s"><td>S<td>24<td><span>05 : 59</span><td><span>17 : 40</span><td><span>16 : 29</span><td><span>04 : 22</span>
<tr class="d"><td>D<td>25<td><span>05 : 59</span><td><span>17 : 40</span><td><span>17 : 11</span><td><span>05 : 18</span>
<tr><td>L<td>26<td><span>06 : 00</span><td><span>17 : 39</span><td><span>17 : 58</span><td><span>06 : 18</span>
<tr><td>M<td>27<td><span>06 : 00</span><td><span>17 : 39</span><td><span>18 : 51</span><td><span>07 : 22</span>
<tr><td>M<td>28<td><span>06 : 00</span><td><span>17 : 38</span><td><span>19 : 51</span><td><span>08 : 28</span>
<tr><td>J<td>29<td><span>06 : 01</span><td><span>17 : 38</span><td><span>20 : 54</span><td><span>09 : 35</span>
<tr><td>V<td>30<td><span>06 : 01</span><td><span>17 : 37</span><td><span>22 : 00</span><td><span>10 : 38</span>
<tr class="s"><td>S<td>31<td><span>06 : 01</span><td><span>17 : 37</span><td><span>23 : 05</span><td><span>11 : 36</span>
</tbody>
<tbody class="ph">
<tr><td colspan="6"><i class="dq"></i>DERNIER QUARTIER le 03
<tr><td colspan="6"><i class="nl"></i>NOUVELLE LUNE le 10
<tr><td colspan="6"><i class="pq"></i>PREMIER QUARTIER le 18
<tr><td colspan="6"><i class="pl"></i>PLEINE LUNE le 26
</tbody>
</table>

<table class="cal">
<colgroup><col class="c1"><col class="c2"><col class="ct"><col class="ct"><col class="ct"><col class="ct"></colgroup>
<thead>
<tr class="h0"><th colspan="6">NOVEMBRE</th></tr>
<tr class="h1"><th colspan="2" rowspan="2">Dates</th><th colspan="2">Soleil</th><th colspan="2">Lune</th></tr>
<tr class="h2"><th>L</th><th>C</th><th>L</th><th>C</th></tr>
</thead>
<tbody class="days">
<tr class="d"><td>D<td>1<td><span>06 : 02</span><td><span>17 : 36</span><td><td><span>12 : 26</span>
<tr><td>L<td>2<td><span>06 : 02</span><td><span>17 : 36</span><td><span>00 : 06</span><td><span>13 : 11</span>
<tr><td>M<td>3<td><span>06 : 03</span><td><span>17 : 36</span><td><span>01 : 03</span><td><span>13 : 51</span>
<tr><td>M<td>4<td><span>06 : 03</span><td><span>17 : 35</span><td><span>01 : 57</span><td><span>14 : 29</span>
<tr><td>J<td>5<td><span>06 : 03</span><td><span>17 : 35</span><td><span>02 : 49</span><td><span>15 : 05</span>
<tr><td>V<td>6<td><span>06 : 04</span><td><span>17 : 35</span><td><span>03 : 41</span><td><span>15 : 42</span>
<tr class="s"><td>S<td>7<td><span>06 : 04</span><td><span>17 : 34</span><td><span>04 : 32</span><td><span>16 : 19</span>
<tr class="d"><td>D<td>8<td><span>06 : 05</span><td><span>17 : 34</span><td><span>05 : 25</span><td><span>17 : 00</span>
<tr><td>L<td>9<td><span>06 : 05</span><td><span>17 : 34</span><td><span>06 : 18</span><td><span>17 : 43</span>
<tr><td>M<td>10<td><span>06 : 05</span><td><span>17 : 33</span><td><span>07 : 12</span><td><span>18 : 29</span>
<tr><td>M<td>11<td><span>06 : 06</span><td><span>17 : 33</span><td><span>08 : 06</span><td><span>19 : 19</span>
<tr><td>J<td>12<td><span>06 : 06</span><td><span>17 : 33</span><td><span>08 : 58</span><td><span>20 : 10</span>
<tr><td>V<td>13<td><span>06 : 07</span><td><span>17 : 33</span><td><span>09 : 48</span><td><span>21 : 03</span>
<tr class="s"><td>S<td>14<td><span>06 : 07</span><td><span>17 : 33</span><td><span>10 : 34</span><td><span>21 : 55</span>
<tr class="d"><td>D<td>15<td><span>06 : 08</span><td><span>17 : 32</span><td><span>11 : 17</span><td><span>22 : 46</span>
<tr><td>L<td>16<td><span>06 : 08</span><td><span>17 : 32</span><td><span>11 : 56</span><td><span>23 : 37</span>
<tr><td>M<td>17<td><span>06 : 09</span><td><span>17 : 32</span><td><span>12 : 32</span><td>
<tr><td>M<td>18<td><span>06 : 09</span><td><span>17 : 32</span><td><span>13 : 08</span><td><span>00 : 26</span>
<tr><td>J<td>19<td><span>06 : 10</span><td><span>17 : 32</span><td><span>13 : 44</span><td><span>01 : 16</span>
<tr><td>V<td>20<td><span>06 : 10</span><td><span>17 : 32</span><td><span>14 : 20</span><td><span>02 : 07</span>
<tr class="s"><td>S<td>21<td><span>06 : 11</span><td><span>17 : 32</span><td><span>15 : 00</span><td><span>03 : 01</span>
<tr class="d"><td>D<td>22<td><span>06 : 11</span><td><span>17 : 32</span><td><span>15 : 45</span><td><span>03 : 58</span>
<tr><td>L<td>23<td><span>06 : 12</span><td><span>17 : 32</span><td><span>16 : 35</span><td><span>05 : 00</span>
<tr><td>M<td>24<td><span>06 : 13</span><td><span>17 : 32</span><td><span>17 : 33</span><td><span>06 : 07</span>
<tr><td>M<td>25<td><span>06 : 13</span><td><span>17 : 32</span><td><span>18 : 37</span><td><span>07 : 15</span>
<tr><td>J<td>26<td><span>06 : 14</span><td><span>17 : 32</span><td><span>19 : 45</span><td><span>08 : 22</span>
<tr><td>V<td>27<td><span>06 : 14</span><td><span>17 : 32</span><td><span>20 : 53</span><td><span>09 : 25</span>
<tr class="s"><td>S<td>28<td><span>06 : 15</span><td><span>17 : 32</span><td><span>21 : 57</span><td><span>10 : 20</span>
<tr class="d"><td>D<td>29<td><span>06 : 15</span><td><span>17 : 32</span><td><span>22 : 58</span><td><span>11 : 08</span>
<tr><td>L<td>30<td><span>06 : 16</span><td><span>17 : 33</span><td><span>23 : 54</span><td><span>11 : 51</span>
</tbody>
<tbody class="ph">
<tr><td colspan="6"><i class="dq"></i>DERNIER QUARTIER le 01
<tr><td colspan="6"><i class="nl"></i>NOUVELLE LUNE le 09
<tr><td colspan="6"><i class="pq"></i>PREMIER QUARTIER le 17
<tr><td colspan="6"><i class="pl"></i>PLEINE LUNE le 24
</tbody>
</table>

<table class="cal">
<colgroup><col class="c1"><col class="c2"><col class="ct"><col class="ct"><col class="ct"><col class="ct"></colgroup>
<thead>
<tr class="h0"><th colspan="6">DÉCEMBRE</th></tr>
<tr class="h1"><th colspan="2" rowspan="2">Dates</th><th colspan="2">Soleil</th><th colspan="2">Lune</th></tr>
<tr class="h2"><th>L</th><th>C</th><th>L</th><th>C</th></tr>
</thead>
<tbody class="days">
<tr><td>M<td>1<td><span>06 : 17</span><td><span>17 : 33</span><td><td><span>12 : 30</span>
<tr><td>M<td>2<td><span>06 : 17</span><td><span>17 : 33</span><td><span>00 : 47</span><td><span>13 : 07</span>
<tr><td>J<td>3<td><span>06 : 18</span><td><span>17 : 33</span><td><span>01 : 38</span><td><span>13 : 43</span>
<tr><td>V<td>4<td><span>06 : 18</span><td><span>17 : 33</span><td><span>02 : 29</span><td><span>14 : 19</span>
<tr class="s"><td>S<td>5<td><span>06 : 19</span><td><span>17 : 34</span><td><span>03 : 20</span><td><span>14 : 58</span>
<tr class="d"><td>D<td>6<td><span>06 : 19</span><td><span>17 : 34</span><td><span>04 : 12</span><td><span>15 : 40</span>
<tr><td>L<td>7<td><span>06 : 20</span><td><span>17 : 34</span><td><span>05 : 06</span><td><span>16 : 25</span>
<tr><td>M<td>8<td><span>06 : 21</span><td><span>17 : 34</span><td><span>06 : 00</span><td><span>17 : 14</span>
<tr><td>M<td>9<td><span>06 : 21</span><td><span>17 : 35</span><td><span>06 : 52</span><td><span>18 : 04</span>
<tr><td>J<td>10<td><span>06 : 22</span><td><span>17 : 35</span><td><span>07 : 43</span><td><span>18 : 57</span>
<tr><td>V<td>11<td><span>06 : 22</span><td><span>17 : 35</span><td><span>08 : 30</span><td><span>19 : 50</span>
<tr class="s"><td>S<td>12<td><span>06 : 23</span><td><span>17 : 36</span><td><span>09 : 14</span><td><span>20 : 41</span>
<tr class="d"><td>D<td>13<td><span>06 : 23</span><td><span>17 : 36</span><td><span>09 : 54</span><td><span>21 : 31</span>
<tr><td>L<td>14<td><span>06 : 24</span><td><span>17 : 37</span><td><span>10 : 31</span><td><span>22 : 20</span>
<tr><td>M<td>15<td><span>06 : 25</span><td><span>17 : 37</span><td><span>11 : 06</span><td><span>23 : 09</span>
<tr><td>M<td>16<td><span>06 : 25</span><td><span>17 : 37</span><td><span>11 : 41</span><td><span>23 : 57</span>
<tr><td>J<td>17<td><span>06 : 26</span><td><span>17 : 38</span><td><span>12 : 15</span><td>
<tr><td>V<td>18<td><span>06 : 26</span><td><span>17 : 38</span><td><span>12 : 53</span><td><span>00 : 48</span>
<tr class="s"><td>S<td>19<td><span>06 : 27</span><td><span>17 : 39</span><td><span>13 : 33</span><td><span>01 : 42</span>
<tr class="d"><td>D<td>20<td><span>06 : 27</span><td><span>17 : 39</span><td><span>14 : 19</span><td><span>02 : 39</span>
<tr><td>L<td>21<td><span>06 : 28</span><td><span>17 : 40</span><td><span>15 : 12</span><td><span>03 : 43</span>
<tr><td>M<td>22<td><span>06 : 28</span><td><span>17 : 40</span><td><span>16 : 13</span><td><span>04 : 49</span>
<tr><td>M<td>23<td><span>06 : 29</span><td><span>17 : 41</span><td><span>17 : 20</span><td><span>05 : 58</span>
<tr><td>J<td>24<td><span>06 : 29</span><td><span>17 : 41</span><td><span>18 : 30</span><td><span>07 : 04</span>
<tr><td>V<td>25<td><span>06 : 30</span><td><span>17 : 42</span><td><span>19 : 39</span><td><span>08 : 05</span>
<tr class="s"><td>S<td>26<td><span>06 : 30</span><td><span>17 : 42</span><td><span>20 : 43</span><td><span>08 : 58</span>
<tr class="d"><td>D<td>27<td><span>06 : 30</span><td><span>17 : 43</span><td><span>21 : 44</span><td><span>09 : 45</span>
<tr><td>L<td>28<td><span>06 : 31</span><td><span>17 : 43</span><td><span>22 : 40</span><td><span>10 : 27</span>
<tr><td>M<td>29<td><span>06 : 31</span><td><span>17 : 44</span><td><span>23 : 33</span><td><span>11 : 06</span>
<tr><td>M<td>30<td><span>06 : 32</span><td><span>17 : 45</span><td><td><span>11 : 43</span>
<tr><td>J<td>31<td><span>06 : 32</span><td><span>17 : 45</span><td><span>00 : 25</span><td><span>12 : 20</span>
</tbody>
<tbody class="ph">
<tr><td colspan="6"><i class="dq"></i>DERNIER QUARTIER le 01
<tr><td colspan="6"><i class="nl"></i>NOUVELLE LUNE le 08
<tr><td colspan="6"><i class="pq"></i>PREMIER QUARTIER le 17
<tr><td colspan="6"><i class="pl"></i>PLEINE LUNE le 23
<tr><td colspan="6"><i class="dq"></i>DERNIER QUARTIER le 30
</tbody>
</table>

</main>
<p class="note">Les heures sont locales, elles tiennent compte du lieu de la commune mais aussi du fuseau horaire de celle-ci.</p>
</body>
</html>
```
FILE: styles.css
```css
* { box-sizing: border-box; }

html, body { background: #ffffff; }

body {
  margin: 0;
  width: 2480px;
  min-height: 3508px;
  font-family: "Liberation Sans", Arial, sans-serif;
  color: #000;
}

/* ---------- heading ---------- */
.head {
  padding: 63px 0 0 72px;
}

.title {
  margin: 0;
  height: 94px;
  font: 700 94px/1 "Open Sans", "Liberation Sans", sans-serif;
  color: #000;
  white-space: nowrap;
}

.title span {
  display: inline-block;
  transform: scaleX(0.755);
  transform-origin: 0 50%;
}

.sub {
  margin: 32px 0 0 31px;
  font: italic 300 41px/1 "Open Sans", "Liberation Sans", sans-serif;
  color: #222;
}

/* ---------- year grid ---------- */
.year {
  display: grid;
  grid-template-columns: repeat(6, 357px);
  column-gap: 45px;
  row-gap: 56px;
  align-items: start;
  padding-left: 57px;
  margin-top: 77px;
}

/* ---------- month table ---------- */
.cal {
  width: 357px;
  border-collapse: collapse;
  table-layout: fixed;
  border: 3px solid #ececec;
  background: #fff;
}

.cal .c1 { width: 37px; }
.cal .c2 { width: 36px; }
.cal .ct { width: 71px; }

.cal th,
.cal td {
  border: 3px solid #ececec;
  padding: 0;
  text-align: center;
  vertical-align: middle;
  white-space: nowrap;
  overflow: visible;
}

.h0 th {
  height: 83px;
  font: 800 44px/1 "Open Sans", "Liberation Sans", sans-serif;
  color: #3366cc;
}

.h1 th {
  height: 58px;
  font: 400 24px/1 "Liberation Sans", Arial, sans-serif;
  color: #3a6ccf;
}

.h2 th {
  height: 59px;
  font: 700 24px/1 "Liberation Sans", Arial, sans-serif;
  color: #3a6ccf;
}

/* day rows */
.days tr { height: 35.3px; }

.days td {
  border-top: 1px solid #fff;
  border-bottom: 1px solid #fff;
  font: 400 22px/1 "Liberation Sans", Arial, sans-serif;
  color: #000;
}

.days td:nth-child(2) { font-weight: 700; }

.days td > span {
  display: inline-block;
  margin: 0 -8px;
  font: 400 25px/1 Roboto, "Liberation Sans", sans-serif;
  word-spacing: -3px;
  color: #4b525c;
  transform: scaleX(0.76);
}

.days tr.s td { background: #e6e9fb; }
.days tr.d td { background: #8ab4f8; }
.days tr.d td:nth-child(-n+2) {
  color: #fff;
  font-weight: 700;
}

/* moon phases */
.ph tr { height: 35px; }

.ph td {
  text-align: left;
  padding-left: 9px;
  font: 700 20px/1 "Liberation Sans", Arial, sans-serif;
  color: #000;
}

.ph i {
  display: inline-block;
  width: 16px;
  height: 13px;
  margin-right: 22px;
  border: 2px solid #000;
  border-radius: 50%;
  vertical-align: -1px;
  background: #fff;
}

.ph i.nl { background: #000; }
.ph i.dq { background: linear-gradient(90deg, #fff 50%, #000 50%); }
.ph i.pq { background: linear-gradient(90deg, #000 50%, #fff 50%); }

/* ---------- footnote ---------- */
.note {
  margin: 76px 0 0;
  text-align: center;
  font: 400 28px/1 "Liberation Sans", Arial, sans-serif;
  letter-spacing: 0.5px;
  color: #000;
}
```
